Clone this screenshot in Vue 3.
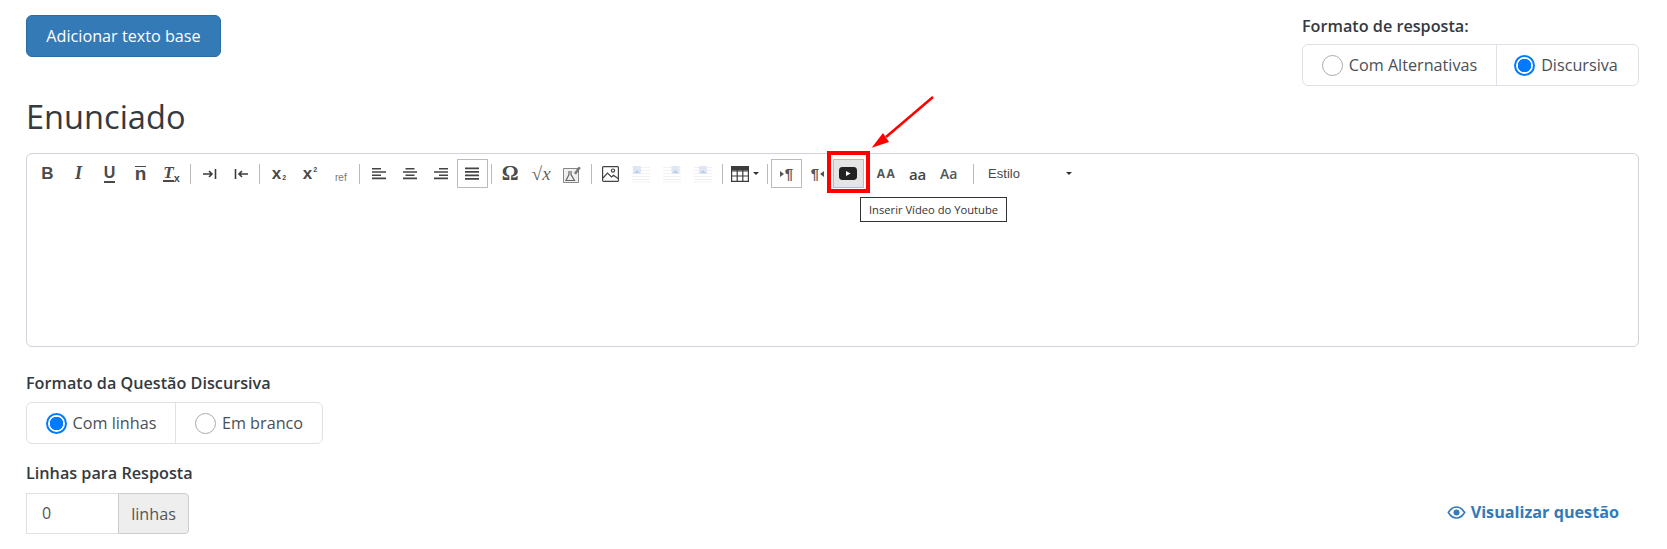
<script setup>
import { ref } from 'vue'

const answerFormat = ref('discursiva')
const lineFormat = ref('linhas')
const lineCount = ref(0)
</script>

<template>
  <div class="page">
    <div class="top-row">
      <button class="btn-primary">Adicionar texto base</button>
      <div class="answer-format">
        <div class="field-label">Formato de resposta:</div>
        <div class="radio-group">
          <label class="radio-item wide">
            <input type="radio" value="alternativas" v-model="answerFormat" />
            <span>Com Alternativas</span>
          </label>
          <label class="radio-item wide-2">
            <input type="radio" value="discursiva" v-model="answerFormat" />
            <span>Discursiva</span>
          </label>
        </div>
      </div>
    </div>

    <h1 class="title">Enunciado</h1>

    <div class="editor">
      <div class="toolbar">
        <button class="tb"><b class="t-b">B</b></button>
        <button class="tb"><i class="t-i">I</i></button>
        <button class="tb"><b class="t-u">U</b></button>
        <button class="tb"><b class="t-o">n</b></button>
        <button class="tb"><i class="t-i t-clear">T</i><b class="t-x">x</b></button>
        <span class="sep"></span>

        <button class="tb">
          <svg width="16" height="16" viewBox="0 0 16 16" fill="none" stroke="#3c3c3c" stroke-width="1.6">
            <path d="M1 8h9M7 5l3 3-3 3" /><path d="M13.5 3v10" />
          </svg>
        </button>
        <button class="tb">
          <svg width="16" height="16" viewBox="0 0 16 16" fill="none" stroke="#3c3c3c" stroke-width="1.6">
            <path d="M15 8H6M9 5L6 8l3 3" /><path d="M2.5 3v10" />
          </svg>
        </button>
        <span class="sep"></span>

        <button class="tb"><b class="t-sx">x</b><b class="t-sub">2</b></button>
        <button class="tb"><b class="t-sx">x</b><b class="t-sup">2</b></button>
        <button class="tb"><span class="t-ref">ref</span></button>
        <span class="sep"></span>

        <button class="tb">
          <svg width="16" height="16" viewBox="0 0 16 16" fill="#444">
            <path d="M1 2h9v1.600H1zM1 5.200h14v1.600H1zM1 8.400h9V10H1zM1 11.600h14v1.600H1z" />
          </svg>
        </button>
        <button class="tb">
          <svg width="16" height="16" viewBox="0 0 16 16" fill="#444">
            <path d="M3.500 2h9v1.600h-9zM1 5.200h14v1.600H1zM3.500 8.400h9V10h-9zM1 11.600h14v1.600H1z" />
          </svg>
        </button>
        <button class="tb">
          <svg width="16" height="16" viewBox="0 0 16 16" fill="#444">
            <path d="M6 2h9v1.600H6zM1 5.200h14v1.600H1zM6 8.400h9V10H6zM1 11.600h14v1.600H1z" />
          </svg>
        </button>
        <button class="tb on">
          <svg width="16" height="16" viewBox="0 0 16 16" fill="#444">
            <path d="M1 1.500h14v1.800H1zM1 5h14v1.800H1zM1 8.500h14v1.800H1zM1 12h14v1.800H1z" />
          </svg>
        </button>
        <span class="sep"></span>

        <button class="tb"><b class="t-omega">Ω</b></button>
        <button class="tb"><span class="t-sqrt">√<i>x</i></span></button>
        <button class="tb">
          <svg width="18" height="18" viewBox="0 0 18 18" fill="none">
            <path d="M.5 3.500h15v14H.5z" fill="#f0f0f0" stroke="#888" />
            <path d="M6 6v3.500L3 15.500h8.500L8 9.500V6" stroke="#666" stroke-width="1.200" />
            <path d="M11 8l4.800-6.500 2 1.500L13 9.500z" fill="#777" />
          </svg>
        </button>
        <span class="sep"></span>

        <button class="tb">
          <svg width="17" height="16" viewBox="0 0 17 16" fill="none" stroke="#444" stroke-width="1.200">
            <rect x="0.6" y="0.6" width="15.800" height="14.800" rx="1" />
            <circle cx="11" cy="4.600" r="1.600" />
            <path d="M1 12l4.500-5 4 4 2-1.800 4.500 3.400" />
          </svg>
        </button>
        <button class="tb">
          <svg width="18" height="18" viewBox="0 0 18 18">
            <path d="M0 2h18v1H0zM0 5h18v1H0zM0 8h18v1H0zM0 11h18v1H0zM0 14h18v1H0zM0 16.500h18v1H0z" fill="#f1f1f1" />
            <rect x="1" y="1" width="8" height="8" fill="#dfe8f2" />
            <path d="M2 8l3-3 3 3z" fill="#b9cfe6" />
          </svg>
        </button>
        <button class="tb">
          <svg width="18" height="18" viewBox="0 0 18 18">
            <path d="M0 2h18v1H0zM0 5h18v1H0zM0 8h18v1H0zM0 11h18v1H0zM0 14h18v1H0zM0 16.500h18v1H0z" fill="#f1f1f1" />
            <rect x="8.500" y="1" width="8" height="8" fill="#dfe8f2" />
            <path d="M9.500 8l3-3 3 3z" fill="#b9cfe6" />
          </svg>
        </button>
        <button class="tb">
          <svg width="18" height="18" viewBox="0 0 18 18">
            <path d="M0 2h18v1H0zM0 5h18v1H0zM0 8h18v1H0zM0 11h18v1H0zM0 14h18v1H0zM0 16.500h18v1H0z" fill="#f1f1f1" />
            <rect x="5" y="1" width="8" height="8" fill="#dfe8f2" />
            <path d="M6 8l3-3 3 3z" fill="#b9cfe6" />
          </svg>
        </button>
        <span class="sep"></span>

        <button class="tb tb-table">
          <svg width="18" height="16" viewBox="0 0 18 16">
            <path d="M0 0h18v4.500H0z" fill="#3c3c3c" />
            <path d="M.6.6h16.800v14.800H.6zM.6 5h16.800M.6 10h16.800M6.200 4v11M11.800 4v11" fill="none" stroke="#3c3c3c" stroke-width="1.200" />
          </svg>
          <span class="caret"></span>
        </button>
        <span class="sep"></span>

        <button class="tb on">
          <span class="t-para"><span class="arr-r"></span>¶</span>
        </button>
        <button class="tb">
          <span class="t-para">¶<span class="arr-l"></span></span>
        </button>
        <button class="tb on hover">
          <svg width="18" height="13" viewBox="0 0 18 13">
            <rect width="18" height="13" rx="3.400" fill="#222" />
            <path d="M7 4l4.600 2.500L7 9z" fill="#fff" />
          </svg>
        </button>
        <span class="sep"></span>

        <button class="tb"><b class="t-aa">AA</b></button>
        <button class="tb"><b class="t-aa low">aa</b></button>
        <button class="tb"><b class="t-aa mix">Aa</b></button>
        <span class="sep sep-wide"></span>

        <div class="combo">
          <span>Estilo</span>
          <span class="caret"></span>
        </div>
      </div>
    </div>

    <div class="field-label discursive-label">Formato da Questão Discursiva</div>
    <div class="radio-group">
      <label class="radio-item lines-a">
        <input type="radio" value="linhas" v-model="lineFormat" />
        <span>Com linhas</span>
      </label>
      <label class="radio-item lines-b">
        <input type="radio" value="branco" v-model="lineFormat" />
        <span>Em branco</span>
      </label>
    </div>

    <div class="bottom-row">
      <div>
        <div class="field-label lines-label">Linhas para Resposta</div>
        <div class="input-group">
          <input type="text" v-model="lineCount" />
          <span class="addon">linhas</span>
        </div>
      </div>
      <a class="preview" href="#" @click.prevent>
        <svg width="19" height="13" viewBox="0 0 18 13" fill="none" stroke="#337ab7">
          <path d="M.8 6.500C3 3 5.800 1 9 1s6 2 8.200 5.500C15 10 12.200 12 9 12S3 10 .8 6.500z" stroke-width="1.500" />
          <circle cx="9" cy="6.500" r="3" fill="#337ab7" stroke="none" />
        </svg>
        Visualizar questão
      </a>
    </div>

    <!-- anotacao por cima do print -->
    <div class="red-box"></div>
    <svg class="arrow" width="70" height="60" viewBox="0 0 70 60">
      <path d="M63 3L16 43" stroke="#f00" stroke-width="2.500" fill="none" />
      <path d="M1.700 53.700L13 39l6 9z" fill="#f00" />
    </svg>
    <div class="tooltip">Inserir Vídeo do Youtube</div>
  </div>
</template>

<style>
html,
body {
  background: #fff;
}
</style>

<style scoped>
.page {
  position: relative;
  height: 549px;
  box-sizing: border-box;
  padding: 15px 28px 0 26px;
  overflow: hidden;
  font-family: 'Open Sans', sans-serif;
  font-size: 16.2px;
  color: #343a40;
}

.top-row {
  display: flex;
  justify-content: space-between;
  align-items: flex-start;
}

.btn-primary {
  width: 195px;
  height: 42px;
  background: #337ab7;
  border: 1px solid #2e6da4;
  border-radius: 6px;
  color: #fff;
  font-family: inherit;
  font-size: 16.2px;
  padding: 0;
}

.answer-format {
  width: 337px;
  margin-top: -1px;
}

.field-label {
  font-weight: 600;
  line-height: 24px;
  margin-bottom: 6px;
}

.radio-group {
  display: inline-flex;
  height: 42px;
  box-sizing: border-box;
  border: 1px solid #dee2e6;
  border-radius: 6px;
}

.radio-item {
  display: flex;
  align-items: center;
  justify-content: center;
  gap: 6px;
  color: #495057;
}

.radio-item + .radio-item {
  border-left: 1px solid #dee2e6;
}

.wide {
  width: 193px;
}

.wide-2 {
  width: 142px;
  padding-right: 3px;
  box-sizing: border-box;
}

.lines-a {
  width: 148px;
}

.lines-b {
  width: 146px;
}

.radio-item input {
  appearance: none;
  width: 21px;
  height: 21px;
  margin: 0;
  border: 1.5px solid #aaa;
  border-radius: 50%;
  background: #fff;
}

.radio-item input:checked {
  border: 2px solid #007bff;
  background: radial-gradient(circle, #007bff 0 6.5px, #fff 7px);
}

.title {
  font-size: 32.6px;
  font-weight: 400;
  line-height: 40px;
  margin: 11px 0 16px;
}

.editor {
  height: 194px;
  box-sizing: border-box;
  border: 1px solid #ced4da;
  border-radius: 6px;
  padding: 5px 0 0 5px;
}

.toolbar {
  display: flex;
  align-items: center;
  height: 29px;
}

.tb {
  flex: 0 0 31px;
  height: 29px;
  padding: 0;
  margin: 0;
  border: 1px solid transparent;
  background: none;
  display: flex;
  align-items: center;
  justify-content: center;
  color: #4a4a4a;
  font-family: 'Liberation Sans', sans-serif;
}

.tb.on {
  border-color: #bcbcbc;
}

.tb.hover {
  background: #e5e5e5;
}

.tb-table {
  flex-basis: 37.6px;
  gap: 4px;
}

.sep {
  flex: 0 0 1px;
  height: 20px;
  margin: 0 3.1px;
  background: #bcbcbc;
}

.sep-wide {
  margin: 0 14px 0 9px;
}

.t-b {
  font-size: 17px;
}

.t-i {
  font-family: 'Liberation Serif', serif;
  font-weight: 700;
  font-size: 18px;
}

.t-u {
  font-size: 16px;
  line-height: 16px;
  border-bottom: 2px solid #4a4a4a;
}

.t-o {
  font-size: 19px;
  line-height: 14px;
  border-top: 1.5px solid #4a4a4a;
}

.t-clear {
  font-size: 17px;
  border-bottom: 2px solid #4a4a4a;
  line-height: 15px;
}

.t-x {
  font-size: 11px;
  margin-top: 8px;
}

.t-sx {
  font-size: 17px;
}

.t-sub {
  font-size: 7px;
  margin: 8px 0 0 1px;
}

.t-sup {
  font-size: 7px;
  margin: -8px 0 0 1px;
}

.t-ref {
  font-size: 10px;
  color: #777;
  margin-top: 8px;
}

.t-omega {
  font-family: 'Liberation Serif', serif;
  font-size: 21px;
}

.t-sqrt {
  font-family: 'Liberation Serif', serif;
  font-size: 19px;
  color: #666;
}

.t-para {
  display: flex;
  align-items: center;
  font-size: 15px;
  font-weight: 700;
  color: #555;
}

.arr-r,
.arr-l {
  width: 0;
  height: 0;
  border-top: 3px solid transparent;
  border-bottom: 3px solid transparent;
}

.arr-r {
  border-left: 4px solid #555;
  margin-right: 1px;
}

.arr-l {
  border-right: 4px solid #555;
  margin-left: 1px;
}

.t-aa {
  font-family: 'Open Sans', sans-serif;
  font-size: 12px;
  letter-spacing: 1.5px;
  color: #555;
}

.t-aa.low {
  font-size: 15px;
  font-weight: 600;
  letter-spacing: 0;
  color: #444;
}

.t-aa.mix {
  font-size: 14px;
  font-weight: 600;
  letter-spacing: 0;
}

.caret {
  width: 0;
  height: 0;
  border-left: 3px solid transparent;
  border-right: 3px solid transparent;
  border-top: 3px solid #333;
}

.combo {
  width: 84px;
  display: flex;
  justify-content: space-between;
  align-items: center;
  font-family: 'Liberation Sans', sans-serif;
  font-size: 13px;
  color: #484848;
}

.discursive-label {
  margin-top: 24px;
  margin-bottom: 7px;
}

.bottom-row {
  display: flex;
  justify-content: space-between;
  align-items: flex-end;
  margin-top: 17px;
  padding-right: 20px;
}

.lines-label {
  margin-bottom: 8px;
}

.input-group {
  display: flex;
  width: 163px;
  height: 41px;
}

.input-group input {
  width: 92px;
  box-sizing: border-box;
  padding: 0 0 2px 15px;
  border: 1px solid #dee2e6;
  border-right: 0;
  font-family: inherit;
  font-size: 16px;
  color: #555;
  outline: none;
}

.addon {
  flex: 1;
  display: flex;
  align-items: center;
  justify-content: center;
  background: #eee;
  border: 1px solid #ccc;
  border-radius: 0 4px 4px 0;
  color: #555;
}

.preview {
  display: flex;
  align-items: center;
  gap: 5px;
  margin-bottom: 11px;
  color: #337ab7;
  font-weight: 700;
  text-decoration: none;
}

/* overlay */
.red-box {
  position: absolute;
  left: 827px;
  top: 151px;
  width: 43px;
  height: 42px;
  box-sizing: border-box;
  border: 4px solid #f00;
}

.arrow {
  position: absolute;
  left: 870px;
  top: 94px;
}

.tooltip {
  position: absolute;
  left: 860px;
  top: 197px;
  width: 147px;
  height: 25px;
  box-sizing: border-box;
  border: 1px solid #333;
  background: #fff;
  font-size: 11.2px;
  line-height: 23px;
  text-align: center;
  color: #333;
}
</style>
